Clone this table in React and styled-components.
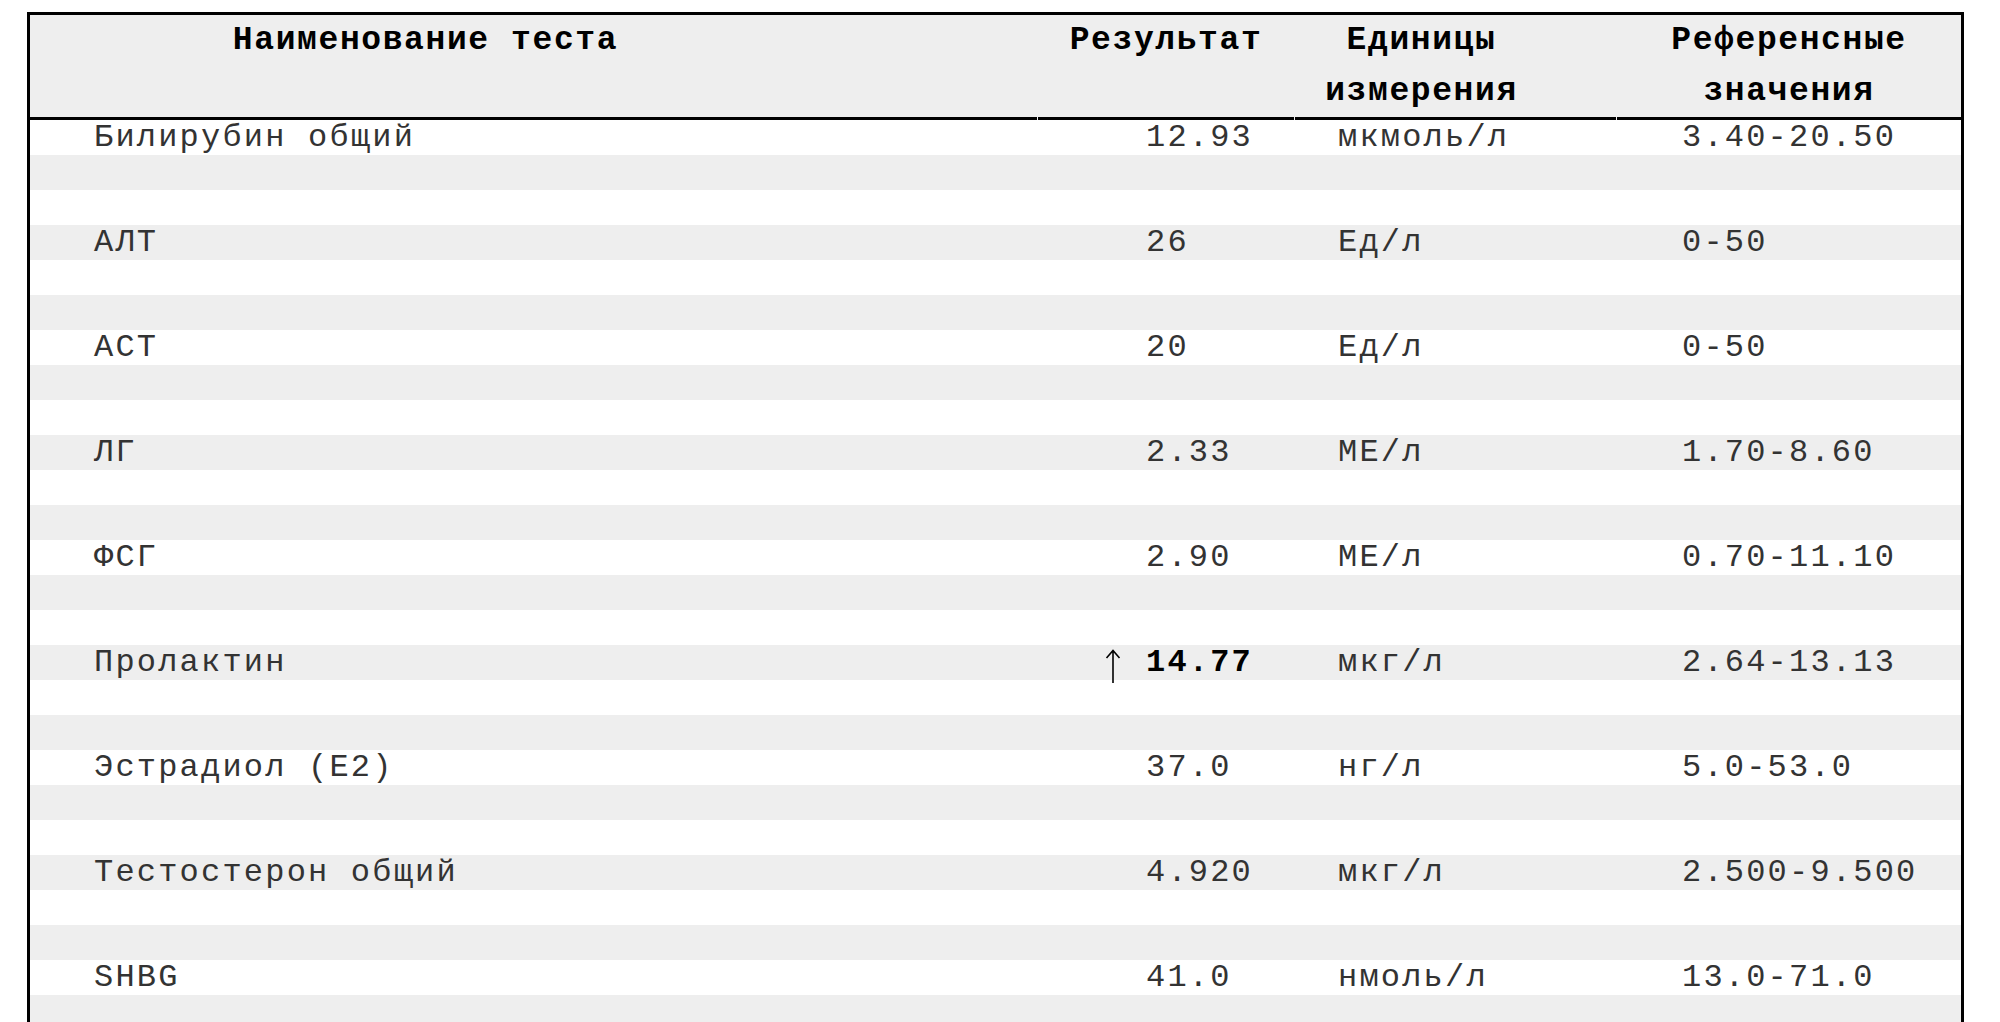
import React from 'react';
import styled, { createGlobalStyle } from 'styled-components';

const GlobalStyle = createGlobalStyle`
  html, body {
    margin: 0;
    padding: 0;
    background: #fff;
  }
  body {
    font-family: "Liberation Mono", "DejaVu Sans Mono", monospace;
  }
`;

const Page = styled.div`
  padding: 12px 0 0 27px;
  height: 1022px;
  overflow: hidden;
  box-sizing: border-box;
`;

const Table = styled.div`
  width: 1937px;
  box-sizing: border-box;
  border: 3px solid #000;
  border-bottom: none;
`;

const HeaderRow = styled.div`
  display: grid;
  grid-template-columns: 1007px 256px 321px 1fr;
  column-gap: 1px;
  background: #eee;
`;

const HeaderCell = styled.div`
  height: 102px;
  border-bottom: 3px solid #000;
  padding-right: ${p => p.$padRight || 0}px;
  font-size: 33px;
  line-height: 51px;
  font-weight: 700;
  letter-spacing: 1.6px;
  color: #000;
  text-align: center;
  white-space: nowrap;
`;

const Band = styled.div`
  display: grid;
  grid-template-columns: 1111px 192px 345px 1fr;
  height: 35px;
  background: ${p => (p.$shade ? '#eee' : '#fff')};
`;

const Cell = styled.div`
  padding-left: ${p => p.$pad}px;
  font-size: 32px;
  line-height: 35px;
  letter-spacing: 2.2px;
  color: #333;
  white-space: nowrap;
`;

const Value = styled.span`
  font-weight: ${p => (p.$high ? 700 : 400)};
  color: ${p => (p.$high ? '#000' : '#333')};
`;

const Flag = styled.span`
  display: inline-block;
  width: 41px;
  margin-left: -41px;
  vertical-align: top;
  padding-top: 4px;
`;

const UpArrow = () => (
  <svg width="16" height="34" viewBox="0 0 16 34">
    <path d="M8 1.5 V34 M1.5 9 L8 1.5 L14.5 9" fill="none" stroke="#000" strokeWidth="1.6" />
  </svg>
);

const tests = [
  { name: 'Билирубин общий', result: '12.93', unit: 'мкмоль/л', range: '3.40-20.50' },
  { name: 'АЛТ', result: '26', unit: 'Ед/л', range: '0-50' },
  { name: 'АСТ', result: '20', unit: 'Ед/л', range: '0-50' },
  { name: 'ЛГ', result: '2.33', unit: 'МЕ/л', range: '1.70-8.60' },
  { name: 'ФСГ', result: '2.90', unit: 'МЕ/л', range: '0.70-11.10' },
  { name: 'Пролактин', result: '14.77', unit: 'мкг/л', range: '2.64-13.13', high: true },
  { name: 'Эстрадиол (E2)', result: '37.0', unit: 'нг/л', range: '5.0-53.0' },
  { name: 'Тестостерон общий', result: '4.920', unit: 'мкг/л', range: '2.500-9.500' },
  { name: 'SHBG', result: '41.0', unit: 'нмоль/л', range: '13.0-71.0' },
];

const App = () => {
  // every test takes three stripes: the data line and two empty ones
  const bands = [];
  tests.forEach((t, i) => {
    bands.push({ key: `d${i}`, test: t });
    bands.push({ key: `a${i}` });
    bands.push({ key: `b${i}` });
  });

  return (
    <>
      <GlobalStyle />
      <Page>
        <Table>
          <HeaderRow>
            <HeaderCell $padRight={216}>Наименование теста</HeaderCell>
            <HeaderCell>Результат</HeaderCell>
            <HeaderCell $padRight={68}>Единицы<br />измерения</HeaderCell>
            <HeaderCell>Референсные<br />значения</HeaderCell>
          </HeaderRow>
          {bands.map((b, idx) => (
            <Band key={b.key} $shade={idx % 2 === 1}>
              {b.test && (
                <>
                  <Cell $pad={64}>{b.test.name}</Cell>
                  <Cell $pad={5}>
                    {b.test.high && (
                      <Flag>
                        <UpArrow />
                      </Flag>
                    )}
                    <Value $high={b.test.high}>{b.test.result}</Value>
                  </Cell>
                  <Cell $pad={5}>{b.test.unit}</Cell>
                  <Cell $pad={4}>{b.test.range}</Cell>
                </>
              )}
            </Band>
          ))}
        </Table>
      </Page>
    </>
  );
};

export default App;
